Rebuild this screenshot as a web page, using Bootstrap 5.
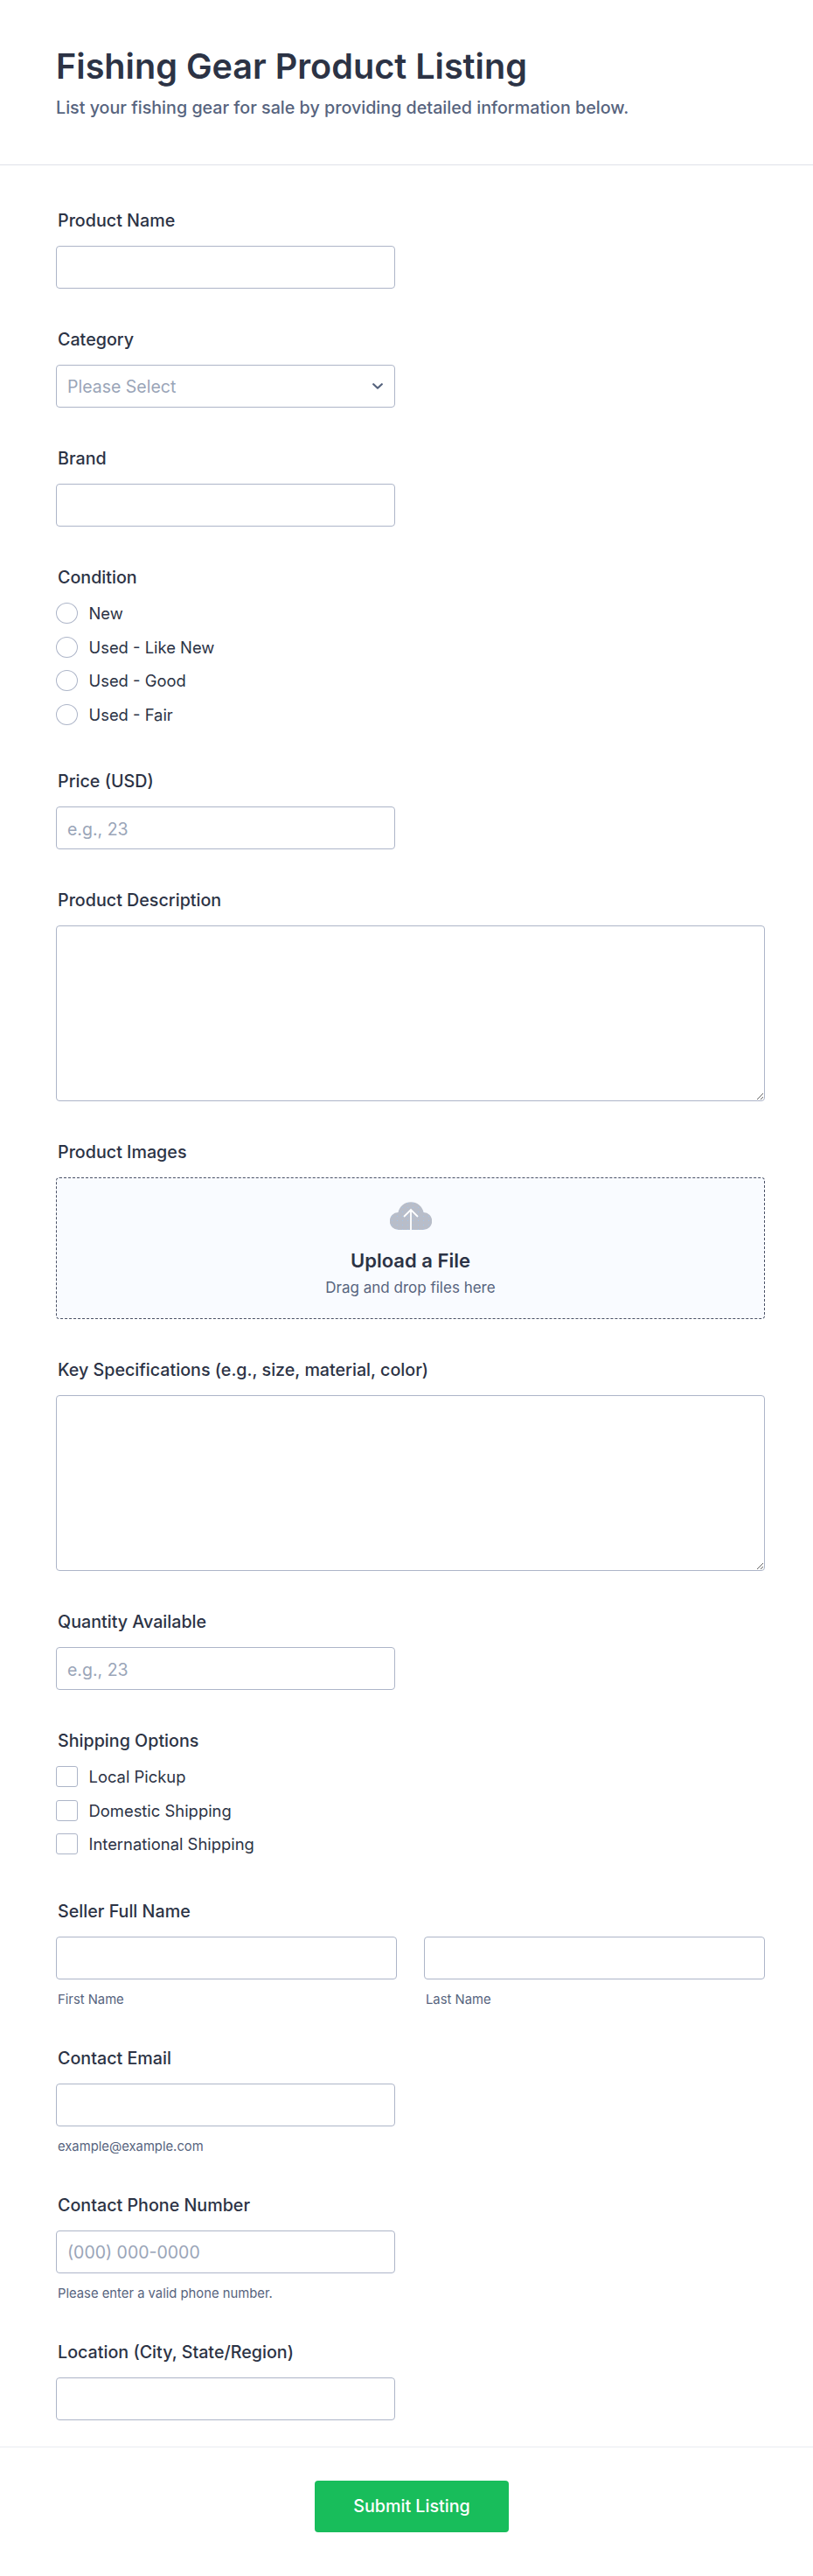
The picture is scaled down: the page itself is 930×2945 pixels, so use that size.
<!DOCTYPE html>
<html lang="en">
<head>
<meta charset="utf-8">
<title>Fishing Gear Product Listing</title>
<link rel="stylesheet" href="https://cdn.jsdelivr.net/npm/bootstrap@5.3.0/dist/css/bootstrap.min.css">
<style>
body{font-family:Inter,"Liberation Sans",sans-serif;color:#2c3345;background:#fff;}
.hdr{padding:52px 64px 53px;border-bottom:1px solid #dfe1e9;}
.hdr-title{font-size:39.6px;line-height:48px;font-weight:600;color:#2c3345;margin:0;}
.hdr-sub{font-size:19.7px;line-height:24px;font-weight:500;color:#57647e;margin:0;padding-top:11px;}
.fields{padding:51px 55px 0 64px;}
.fld{margin-bottom:46px;}
.fld-label{display:block;font-size:19.7px;line-height:24px;font-weight:500;color:#2c3345;margin:0 0 17px 2px;}
.fld .form-control,.fld .form-select{height:49px;border:1px solid #adb5c8;border-radius:4px;font-size:19.5px;color:#2c3345;box-shadow:none;}
.wide-no{width:388px;}
.fld .form-control{padding:2px 12px 0;}
.fld .form-control::placeholder{color:#9aa5b8;}
.fld .form-select{padding:2px 12px 0;color:#9aa5b8;background-image:url("data:image/svg+xml,%3csvg xmlns='http://www.w3.org/2000/svg' viewBox='0 0 12 7'%3e%3cpath fill='none' stroke='%2357647e' stroke-width='2.200' stroke-linecap='round' stroke-linejoin='round' d='M1.200 1.200 6 5.800l4.800-4.600'/%3e%3c/svg%3e");background-position:right 13px center;background-size:12px 7px;}
.fld textarea.form-control{height:201px;padding:10px 12px;}
.opts{display:flex;flex-direction:column;gap:14.5px;padding-bottom:6.500px;}
.opt{display:flex;align-items:center;gap:12.5px;height:24px;margin:0;padding:0;min-height:0;}
.opt .form-check-input{width:25px;height:24px;margin:0;float:none;border:1px solid #adb5c8;flex:none;}
.opt .form-check-input[type=checkbox]{border-radius:3px;}
.opt label{font-size:18.4px;line-height:24px;color:#2c3345;}
.hint{display:block;font-size:14.8px;line-height:18px;color:#57647e;margin:14px 0 0 2px;}
.drop{height:162px;background:#f9fbff;border:1px dashed #4a5166;border-radius:4px;text-align:center;padding-top:26px;}
.drop svg{display:block;margin:0 auto;}
.drop-title{font-size:22px;line-height:28px;font-weight:600;color:#2c3345;margin-top:20px;}
.drop-sub{font-size:17px;line-height:24px;color:#57647e;margin-top:5px;}
.name-pair{gap:31px;}
.name-pair>div{flex:1 1 0;}
.foot{margin-top:-16px;border-top:1px solid #e9ebf1;padding:38px 0 50px 12px;text-align:center;}
.go{width:222px;height:59px;padding-top:8px;background:#18bd5b;border:0;border-radius:4px;color:#fff;font-size:19.7px;font-weight:500;}
.go:hover{background:#18bd5b;color:#fff;}
</style>
</head>
<body>
<header class="hdr">
  <h1 class="hdr-title">Fishing Gear Product Listing</h1>
  <p class="hdr-sub">List your fishing gear for sale by providing detailed information below.</p>
</header>
<form class="fields">
  <div class="fld"><label class="fld-label" for="a1">Product Name</label><input id="a1" class="form-control wide-no" type="text"></div>
  <div class="fld"><label class="fld-label" for="a2">Category</label>
    <select id="a2" class="form-select wide-no"><option>Please Select</option><option>Rods</option><option>Reels</option></select></div>
  <div class="fld"><label class="fld-label" for="a3">Brand</label><input id="a3" class="form-control wide-no" type="text"></div>
  <div class="fld"><span class="fld-label">Condition</span>
    <div class="opts">
      <div class="form-check opt"><input class="form-check-input" type="radio" name="c" id="c1"><label for="c1">New</label></div>
      <div class="form-check opt"><input class="form-check-input" type="radio" name="c" id="c2"><label for="c2">Used - Like New</label></div>
      <div class="form-check opt"><input class="form-check-input" type="radio" name="c" id="c3"><label for="c3">Used - Good</label></div>
      <div class="form-check opt"><input class="form-check-input" type="radio" name="c" id="c4"><label for="c4">Used - Fair</label></div>
    </div></div>
  <div class="fld"><label class="fld-label" for="a4">Price (USD)</label><input id="a4" class="form-control wide-no" type="text" placeholder="e.g., 23"></div>
  <div class="fld"><label class="fld-label" for="a5">Product Description</label><textarea id="a5" class="form-control"></textarea></div>
  <div class="fld"><span class="fld-label">Product Images</span>
    <div class="drop">
      <svg width="48" height="34" viewBox="0 0 48 34" aria-hidden="true"><defs><pattern id="spk" width="6" height="5" patternUnits="userSpaceOnUse"><rect width="6" height="5" fill="#b8bdc9"/><rect x="2" y="2" width="1" height="1" fill="#a3c4ea"/></pattern></defs><path fill="url(#spk)" d="M10 33a10 10 0 0 1-.5-20A14.800 14.800 0 0 1 38.500 13 10 10 0 0 1 38 33z"/><path fill="none" stroke="#fff" stroke-width="1.800" d="M24 33V10M16 18l8-8 8 8"/></svg>
      <div class="drop-title">Upload a File</div>
      <div class="drop-sub">Drag and drop files here</div>
    </div></div>
  <div class="fld"><label class="fld-label" for="a6">Key Specifications (e.g., size, material, color)</label><textarea id="a6" class="form-control"></textarea></div>
  <div class="fld"><label class="fld-label" for="a7">Quantity Available</label><input id="a7" class="form-control wide-no" type="text" placeholder="e.g., 23"></div>
  <div class="fld"><span class="fld-label">Shipping Options</span>
    <div class="opts">
      <div class="form-check opt"><input class="form-check-input" type="checkbox" id="s1"><label for="s1">Local Pickup</label></div>
      <div class="form-check opt"><input class="form-check-input" type="checkbox" id="s2"><label for="s2">Domestic Shipping</label></div>
      <div class="form-check opt"><input class="form-check-input" type="checkbox" id="s3"><label for="s3">International Shipping</label></div>
    </div></div>
  <div class="fld"><span class="fld-label">Seller Full Name</span>
    <div class="d-flex name-pair">
      <div><input class="form-control" type="text" aria-label="First Name"><span class="hint">First Name</span></div>
      <div><input class="form-control" type="text" aria-label="Last Name"><span class="hint">Last Name</span></div>
    </div></div>
  <div class="fld"><label class="fld-label" for="a8">Contact Email</label><input id="a8" class="form-control wide-no" type="email"><span class="hint">example@example.com</span></div>
  <div class="fld"><label class="fld-label" for="a9">Contact Phone Number</label><input id="a9" class="form-control wide-no" type="tel" placeholder="(000) 000-0000"><span class="hint">Please enter a valid phone number.</span></div>
  <div class="fld"><label class="fld-label" for="a10">Location (City, State/Region)</label><input id="a10" class="form-control wide-no" type="text"></div>
</form>
<footer class="foot"><button type="button" class="btn go">Submit Listing</button></footer>
</body>
</html>
